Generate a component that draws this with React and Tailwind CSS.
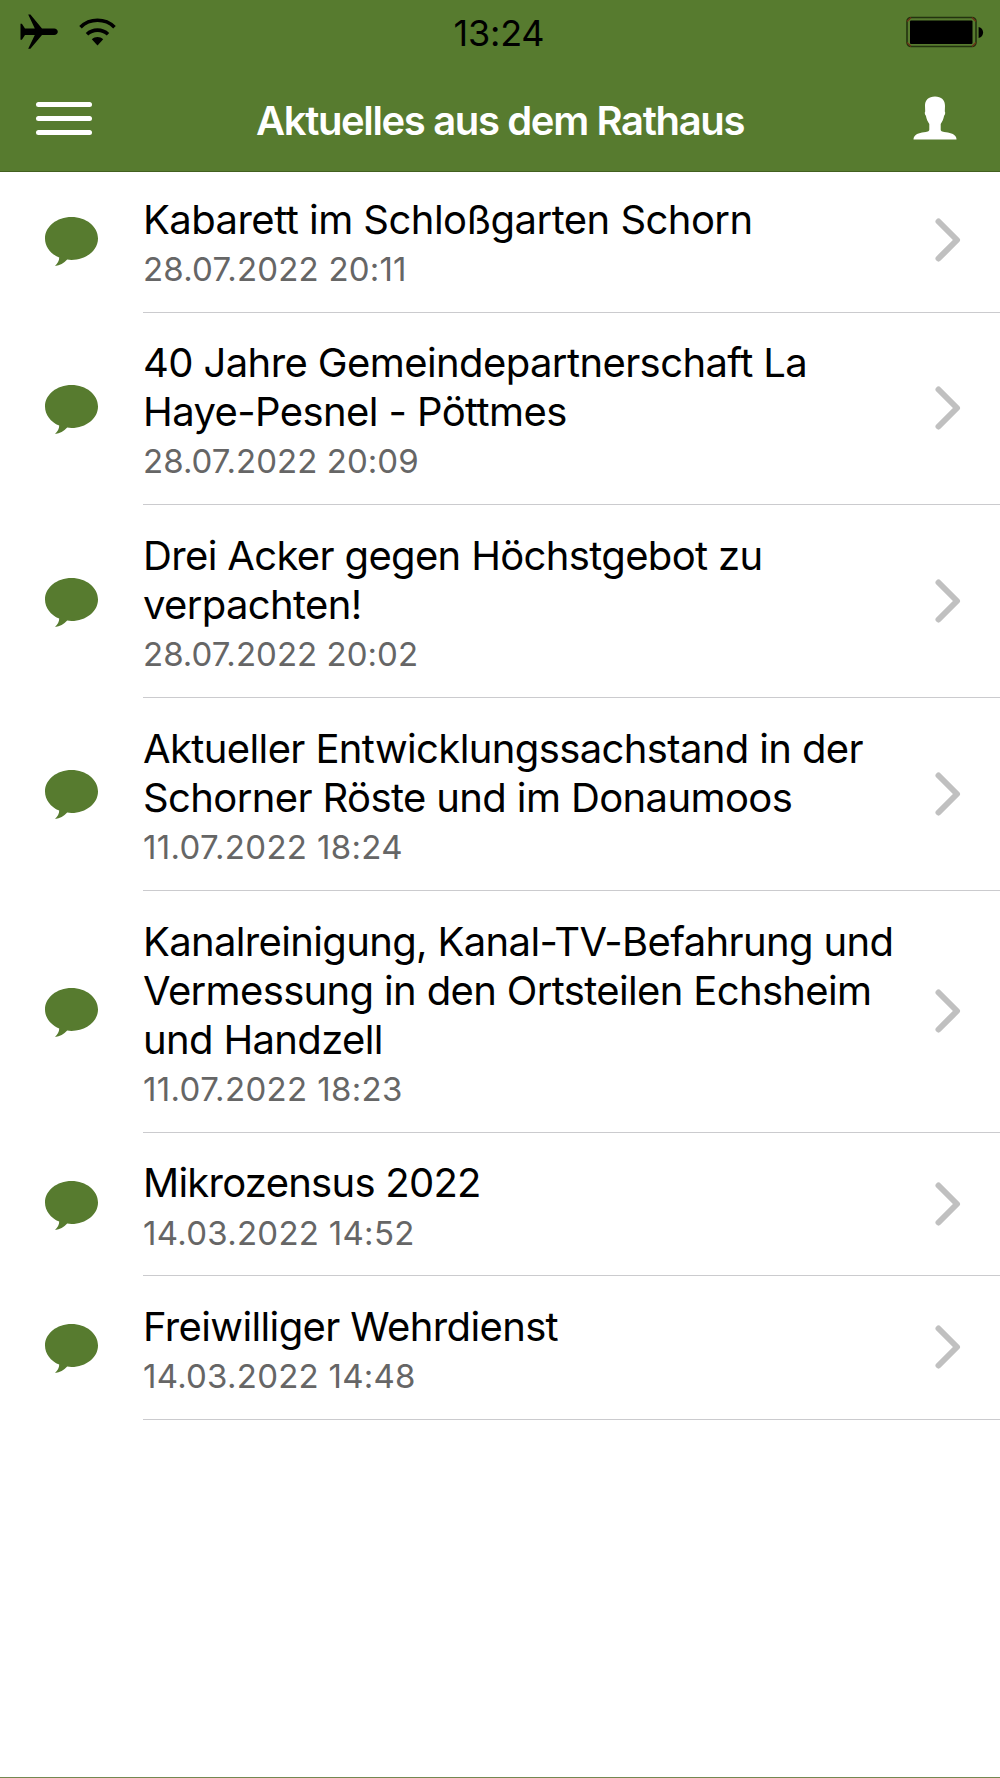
import React from "react";

const NEWS = [
  { id: 1, title: ["Kabarett im Schloßgarten Schorn"], date: "28.07.2022 20:11", tracking: "tracking-[-0.54px]", dateTracking: "tracking-[0.2px]" },
  { id: 2, title: ["40 Jahre Gemeindepartnerschaft La", "Haye-Pesnel - Pöttmes"], date: "28.07.2022 20:09", tracking: "tracking-[-0.6px]", dateTracking: "tracking-[0.05px]" },
  { id: 3, title: ["Drei Acker gegen Höchstgebot zu", "verpachten!"], date: "28.07.2022 20:02", tracking: "tracking-[-0.65px]", dateTracking: "tracking-[0.03px]" },
  { id: 4, title: ["Aktueller Entwicklungssachstand in der", "Schorner Röste und im Donaumoos"], date: "11.07.2022 18:24", tracking: "tracking-[-0.62px]", dateTracking: "tracking-[0.34px]" },
  { id: 5, title: ["Kanalreinigung, Kanal-TV-Befahrung und", "Vermessung in den Ortsteilen Echsheim", "und Handzell"], date: "11.07.2022 18:23", tracking: "tracking-[-0.65px]", dateTracking: "tracking-[0.36px]" },
  { id: 6, title: ["Mikrozensus 2022"], date: "14.03.2022 14:52", tracking: "tracking-[-0.74px]", dateTracking: "tracking-[0.28px]" },
  { id: 7, title: ["Freiwilliger Wehrdienst"], date: "14.03.2022 14:48", tracking: "tracking-[-0.63px]", dateTracking: "tracking-[0.25px]" },
];

function PlaneIcon() {
  return (
    <svg width="38" height="36" viewBox="0 0 38 36" className="shrink-0">
      <path
        fill="#000"
        d="M0.5 9.7h1.400L5 14.400h9.800L8.200 0.600h2.200L22 14.400h12.200c2 0 3.600 1.400 3.600 3.300s-1.600 3.300-3.600 3.300H22L10.400 34.800H8.200L14.800 21H5l-3.100 4.700H0.500z"
      />
    </svg>
  );
}

function WifiIcon() {
  return (
    <svg width="38" height="30" viewBox="0 0 38 30" fill="none" className="shrink-0">
      <path d="M1.500 10.200C10.800 1 26.200 1 35.500 10.200" stroke="#000" strokeWidth="3.600" />
      <path d="M8 17.200c5.800-5.400 15.200-5.400 21 0" stroke="#000" strokeWidth="3.600" />
      <path d="M12.800 22.300c3.200-3.200 8.200-3.200 11.400 0L18.500 28.600z" fill="#000" />
    </svg>
  );
}

function BatteryIcon() {
  return (
    <svg width="78" height="32" viewBox="0 0 78 32" fill="none" className="shrink-0">
      <rect x="1" y="1.500" width="69" height="29" rx="4" stroke="#23330f" strokeWidth="1.600" />
      <path d="M1 5.500L5 1.500M66 1.500l4 4M1 26.500l4 4M66 30.500l4-4" stroke="#6b3016" strokeWidth="1.200" />
      <rect x="4" y="4.500" width="62.500" height="23.500" rx="1" fill="#000" />
      <path d="M72.600 11c6 1.400 6 9.600 0 11z" fill="#000" />
    </svg>
  );
}

function PersonIcon() {
  return (
    <svg width="44" height="44" viewBox="0 0 44 44" className="shrink-0">
      <path
        fill="#fff"
        d="M22 0.500c6.400 0 10.200 3.700 10 9.500l-0.200 5.500c0.700 0.600 0.500 3.200-0.700 4.300-0.600 3.400-1.700 5.700-3.400 8.200v5.400c0 1 0.600 1.800 1.600 2.100 5 1.300 10.500 1.200 13 4.500 0.700 0.900 1.200 2.200 1.200 3.500h-43c0-1.300 0.500-2.600 1.200-3.500 2.500-3.300 8-3.200 13-4.500 1-0.300 1.600-1.100 1.600-2.100V28c-1.700-2.500-2.800-4.800-3.400-8.200-1.200-1.100-1.400-3.700-0.700-4.300L12 10C11.800 4.200 15.600 0.500 22 0.500z"
      />
    </svg>
  );
}

function BubbleIcon() {
  return (
    <svg width="54" height="50" viewBox="0 0 54 50" className="shrink-0">
      <path
        fill="#577b2f"
        d="M26.500 0C41.100 0 53 9.500 53 21.400s-11.900 21.500-26.500 21.500c-1.500 0-2.900-0.100-4.300-0.300-3.400 3.700-7.300 6-12.200 6.500 2.600-2.600 4.300-5.300 4.200-8.500C5.700 36.900 0 29.700 0 21.400 0 9.500 11.900 0 26.500 0z"
      />
    </svg>
  );
}

function ChevronIcon() {
  return (
    <svg width="26" height="44" viewBox="0 0 26 44" fill="none" className="mb-[3.4px] shrink-0">
      <path d="M3.500 3.500L22 22 3.500 40.500" stroke="#c0c0c0" strokeWidth="6" strokeLinecap="round" strokeLinejoin="round" />
    </svg>
  );
}

function NewsRow({ item }) {
  return (
    <li className="flex items-stretch pl-[45px]">
      <div className="flex w-[98px] shrink-0 items-center pt-[2px]">
        <BubbleIcon />
      </div>
      <div className="flex min-w-0 flex-1 items-center justify-between border-b border-[#cbcbce] pt-[25.7px] pr-[39px] pb-[22.9px]">
        <div>
          <h2 className={`text-[40px] leading-[49.1px] whitespace-nowrap text-black ${item.tracking}`}>
            {item.title.map((line) => (
              <span key={line} className="block">{line}</span>
            ))}
          </h2>
          <p className={`mt-[5px] text-[33px] leading-[40px] text-[#666] ${item.dateTracking}`}>{item.date}</p>
        </div>
        <ChevronIcon />
      </div>
    </li>
  );
}

export default function App() {
  return (
    <div className="flex h-[1778px] w-[1000px] flex-col overflow-hidden border-b border-[#73884f] bg-white font-['Inter',sans-serif]">
      <header className="h-[171.5px] shrink-0 border-b border-[#42601f] bg-[#577b2f]">
        <div className="grid h-[64px] grid-cols-3 items-center pr-[16px] pl-[20px]">
          <div className="flex items-center gap-[21px]">
            <PlaneIcon />
            <WifiIcon />
          </div>
          <time className="pt-[2px] pr-[6px] text-center text-[36px] leading-none tracking-[-0.2px] text-black">13:24</time>
          <div className="flex justify-end">
            <BatteryIcon />
          </div>
        </div>
        <div className="flex h-[108px] items-center justify-between pr-[43px] pl-[36px]">
          <button aria-label="Menü" className="flex w-[56px] flex-col gap-[9px]">
            <span className="h-[5px] rounded-full bg-white" />
            <span className="h-[5px] rounded-full bg-white" />
            <span className="h-[5px] rounded-full bg-white" />
          </button>
          <h1 className="pt-[5px] pr-[5px] text-[40px] leading-none font-semibold tracking-[-1.36px] whitespace-nowrap text-white">
            Aktuelles aus dem Rathaus
          </h1>
          <button aria-label="Profil">
            <PersonIcon />
          </button>
        </div>
      </header>
      <ul className="-mt-[2.6px]">
        {NEWS.map((item) => (
          <NewsRow key={item.id} item={item} />
        ))}
      </ul>
    </div>
  );
}
